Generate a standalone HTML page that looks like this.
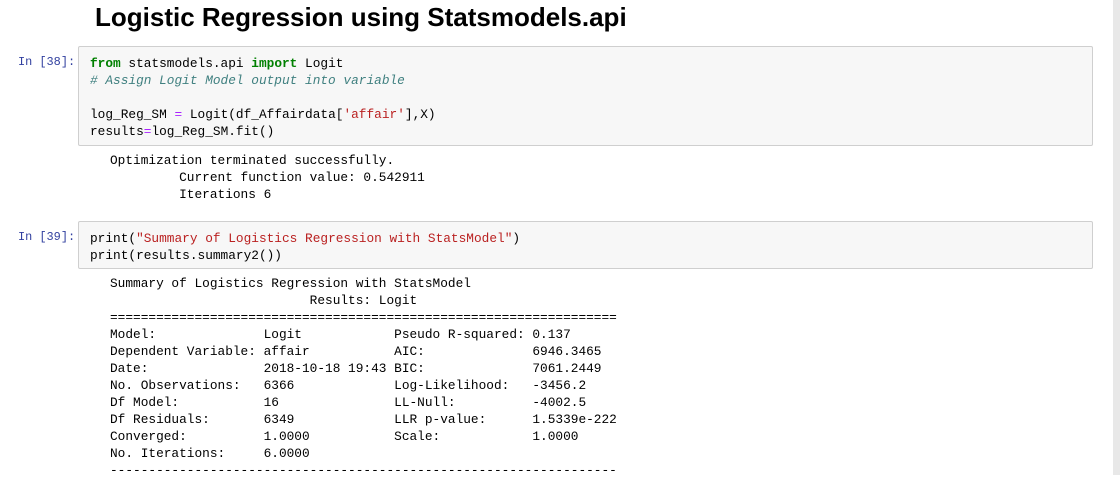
<!DOCTYPE html>
<html><head><style>
body{margin:0;background:#fff;width:1120px;height:475px;overflow:hidden;position:relative;font-family:"Liberation Mono",monospace;}
h1{position:absolute;left:95px;top:2px;margin:0;font:bold 26px "Liberation Sans",sans-serif;color:#000;}
.sb{position:absolute;left:1113px;top:0;width:7px;height:475px;background:#e8e8e8;}
.p{position:absolute;left:18px;font-size:11.9px;color:#303F9F;line-height:17px;}
.cell{position:absolute;left:78px;width:1013px;background:#f7f7f7;border:1px solid #cfcfcf;border-radius:2px;}
pre{margin:0;font-family:"Liberation Mono",monospace;font-size:12.8px;line-height:17px;color:#000;}
.k{color:#008000;font-weight:bold}.c{color:#408080;font-style:italic}.s{color:#BA2121}.o{color:#AA22FF}
.out{position:absolute;left:110px;}
</style></head><body>
<h1>Logistic Regression using Statsmodels.api</h1>
<div class="sb"></div>
<div class="p" style="top:54px">In [38]:</div>
<div class="cell" style="top:46px;height:98px"><pre style="padding:8px 0 0 11px"><span class="k">from</span> statsmodels.api <span class="k">import</span> Logit
<span class="c"># Assign Logit Model output into variable</span>

log_Reg_SM <span class="o">=</span> Logit(df_Affairdata[<span class="s">'affair'</span>],X)
results<span class="o">=</span>log_Reg_SM.fit()</pre></div>
<pre class="out" style="top:152px">Optimization terminated successfully.
         Current function value: 0.542911
         Iterations 6</pre>
<div class="p" style="top:229px">In [39]:</div>
<div class="cell" style="top:221px;height:46px"><pre style="padding:8px 0 0 11px">print(<span class="s">"Summary of Logistics Regression with StatsModel"</span>)
print(results.summary2())</pre></div>
<pre class="out" style="top:275px">Summary of Logistics Regression with StatsModel
                          Results: Logit
==================================================================
Model:              Logit            Pseudo R-squared: 0.137
Dependent Variable: affair           AIC:              6946.3465
Date:               2018-10-18 19:43 BIC:              7061.2449
No. Observations:   6366             Log-Likelihood:   -3456.2
Df Model:           16               LL-Null:          -4002.5
Df Residuals:       6349             LLR p-value:      1.5339e-222
Converged:          1.0000           Scale:            1.0000
No. Iterations:     6.0000
------------------------------------------------------------------</pre>
</body></html>
